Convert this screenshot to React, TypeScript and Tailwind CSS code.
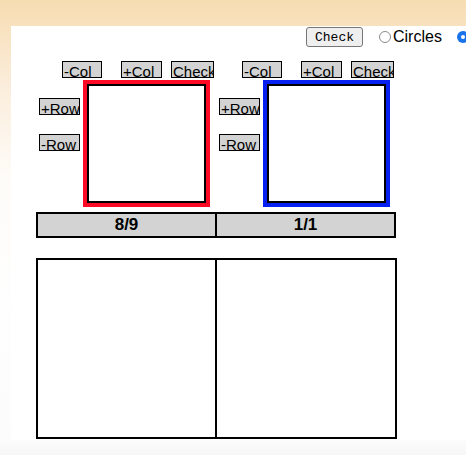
import React from "react";

const btn =
  "h-[17px] bg-[#d3d3d3] border border-black text-[15px] leading-[15px] text-left pl-[1px] overflow-hidden text-black";

function Board({ color }: { color: string }) {
  return (
    <div className="w-[180px] flex flex-col">
      <div className="flex h-[17px]">
        <button className={`${btn} w-[40px] ml-[26px]`}>
          <span className="relative top-[2px]">-Col</span>
        </button>
        <button className={`${btn} w-[41px] ml-[19px]`}>
          <span className="relative top-[2px]">+Col</span>
        </button>
        <button className={`${btn} w-[43px] ml-[9px]`}>
          <span className="relative top-[2px]">Check</span>
        </button>
      </div>
      <div className="flex mt-[2px]">
        <div className="flex flex-col ml-[3px] w-[41px] pt-[18px]">
          <button className={`${btn} w-[41px]`}>
            <span className="relative top-[2px]">+Row</span>
          </button>
          <button className={`${btn} w-[41px] mt-[19px]`}>
            <span className="relative top-[2px]">-Row</span>
          </button>
        </div>
        <div
          className={`ml-[3px] w-[127px] h-[127px] border-4 ${
            color === "red" ? "border-[#ff0a24]" : "border-[#0620f2]"
          }`}
        >
          <div className="w-full h-full border-2 border-black bg-white" />
        </div>
      </div>
    </div>
  );
}

export default function App() {
  return (
    <div
      className="w-[466px] h-[455px] overflow-hidden pl-[11px] pt-[26px] bg-[linear-gradient(#f7dcb2_0px,#fbeedd_90px,#fefcf9_180px,#fefefe_300px,#fcfcfc_440px,#f6f6f6_455px)]"
      style={{ fontFamily: '"Liberation Sans", Arial, sans-serif' }}
    >
      <div className="w-[520px] h-[414px] bg-white">
        <div className="flex items-center pt-[1px] h-[21px]">
          <button
            className="ml-[295px] w-[57px] h-[20px] bg-[#efefef] border border-[#767676] rounded-[3px] text-[13px] text-black"
            style={{ fontFamily: '"Liberation Mono", "Courier New", monospace' }}
          >
            Check
          </button>
          <span className="ml-[16px] w-[12px] h-[12px] rounded-full border border-[#8a8a8a] bg-white" />
          <span className="ml-[2px] text-[16px] text-black">Circles</span>
          <span className="ml-[15px] w-[12px] h-[12px] rounded-full bg-[#1a73e8] flex items-center justify-center">
            <span className="w-[4px] h-[4px] rounded-full bg-white" />
          </span>
        </div>
        <div className="ml-[25px] mt-[14px] flex">
          <Board color="red" />
          <Board color="blue" />
        </div>
        <div className="ml-[25px] mt-[5px] w-[360px] h-[26px] border-2 border-black bg-[#d3d3d3] flex text-[17px] font-bold text-black">
          <div className="flex-1 border-r-2 border-black flex items-center justify-center">8/9</div>
          <div className="flex-1 flex items-center justify-center">1/1</div>
        </div>
        <div className="ml-[25px] mt-[20px] w-[361px] h-[181px] border-2 border-black flex">
          <div className="w-[179px] border-r-2 border-black" />
          <div className="flex-1" />
        </div>
      </div>
    </div>
  );
}
